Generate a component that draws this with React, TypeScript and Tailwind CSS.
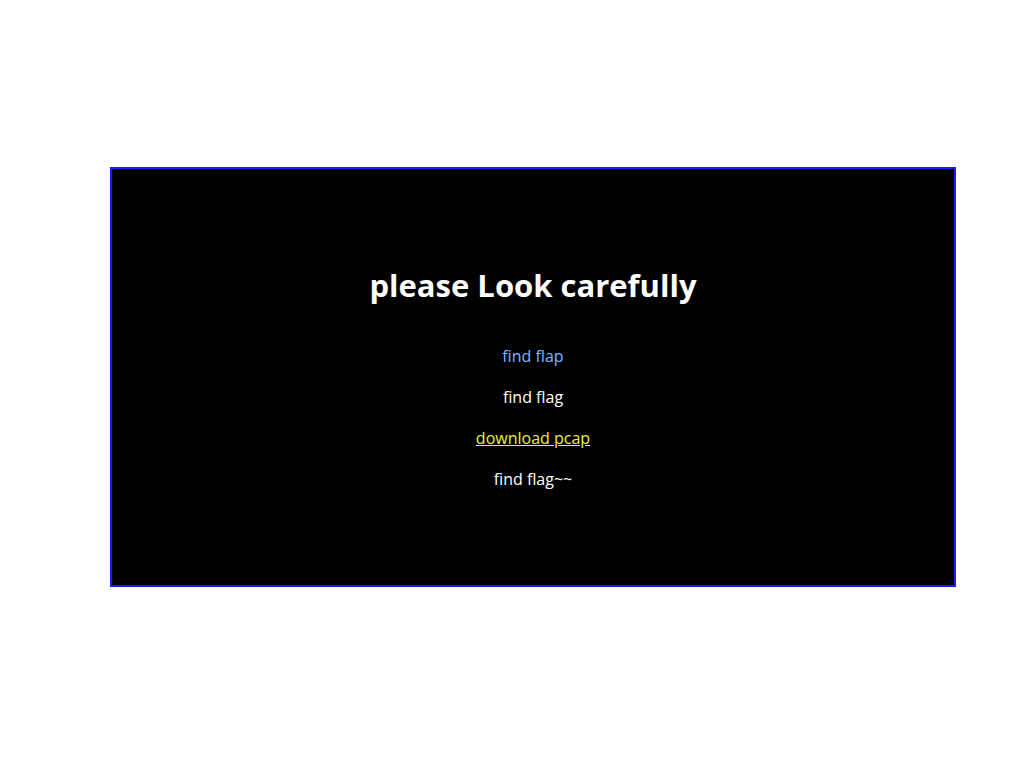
export default function App() {
  return (
    <div className="min-h-[760px] bg-white pt-[167px] font-['Open_Sans',sans-serif]">
      {/* Framed black panel */}
      <div className="ml-[110px] w-[846px] border-2 border-[#1a1aff] bg-black pt-[95px] pb-[95px] text-center">
        <h1 className="text-[31px] font-bold leading-[43px] text-white">please Look carefully</h1>
        <div className="mt-[38px] flex flex-col items-center gap-[19px] text-[16px] leading-[22px]">
          <p className="text-[#7ab8ff]">find flap</p>
          <p className="text-white">find flag</p>
          <a href="#" className="text-[#eef03c] underline">download pcap</a>
          <p className="text-white">find flag~~</p>
        </div>
      </div>
    </div>
  )
}
